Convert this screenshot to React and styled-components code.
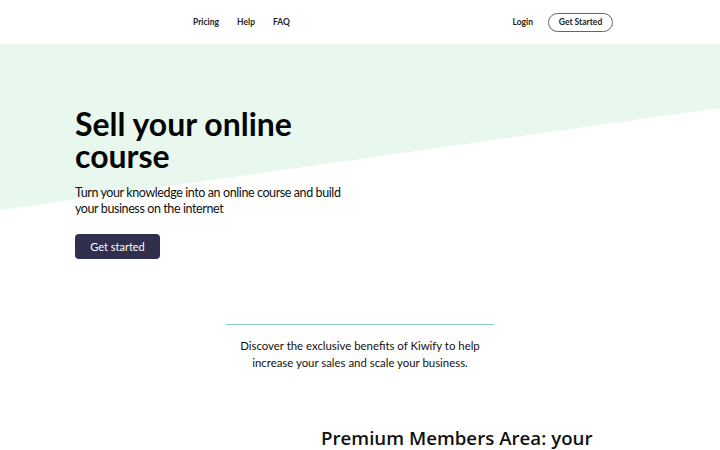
import React from "react"
import styled, { createGlobalStyle } from "styled-components"

const GlobalStyle = createGlobalStyle`
  * { box-sizing: border-box; }
  body {
    margin: 0;
    background: #fff;
    font-family: Lato, "Noto Sans", sans-serif;
    color: #111;
  }
`

const App = () => {
  return (
    <>
      <GlobalStyle />
      <Header>
        <NavLinks>
          <NavLink href="#">Pricing</NavLink>
          <NavLink href="#">Help</NavLink>
          <NavLink href="#">FAQ</NavLink>
        </NavLinks>
        <NavActions>
          <NavLink href="#">Login</NavLink>
          <OutlineButton href="#">Get Started</OutlineButton>
        </NavActions>
      </Header>

      <Hero>
        <HeroContent>
          <HeroTitle>Sell your online course</HeroTitle>
          <HeroText>
            Turn your knowledge into an online course and build your business on
            the internet
          </HeroText>
          <PrimaryButton href="#">Get started</PrimaryButton>
        </HeroContent>
      </Hero>

      <Benefits>
        <Divider />
        <BenefitsText>
          Discover the exclusive benefits of Kiwify to help increase your sales
          and scale your business.
        </BenefitsText>
      </Benefits>

      <Feature>
        <FeatureTitle>Premium Members Area: your</FeatureTitle>
      </Feature>
    </>
  )
}

export default App

const Header = styled.header`
  height: 44px;
  display: flex;
  align-items: center;
  justify-content: space-between;
  padding: 0 107px 0 193px;
`

const NavLinks = styled.nav`
  display: flex;
  align-items: center;
  gap: 18px;
`

const NavActions = styled.div`
  display: flex;
  align-items: center;
  gap: 15px;
`

const NavLink = styled.a`
  font-size: 8.5px;
  font-weight: 700;
  color: #222;
  text-decoration: none;
`

const OutlineButton = styled.a`
  display: inline-flex;
  align-items: center;
  justify-content: center;
  width: 65px;
  height: 19px;
  border: 1px solid #666;
  border-radius: 10px;
  font-size: 8.5px;
  font-weight: 700;
  color: #222;
  text-decoration: none;
`

const Hero = styled.section`
  position: relative;
  height: 240px;
  padding: 64px 0 0 75px;

  &::before {
    content: "";
    position: absolute;
    inset: 0;
    background: #e8f8ee;
    clip-path: polygon(0 0, 100% 0, 100% 64px, 0 166px);
    z-index: -1;
  }
`

const HeroContent = styled.div`
  width: 290px;
`

const HeroTitle = styled.h1`
  margin: 0;
  font-size: 32px;
  line-height: 32px;
  font-weight: 700;
  color: #050505;
`

const HeroText = styled.p`
  margin: 13px 0 17px;
  font-size: 12.5px;
  line-height: 16px;
  letter-spacing: -0.4px;
  color: #111;
  width: 270px;
`

const PrimaryButton = styled.a`
  display: inline-flex;
  align-items: center;
  justify-content: center;
  width: 85px;
  height: 25px;
  border-radius: 4px;
  background: #302f4d;
  color: #fff;
  font-size: 11px;
  text-decoration: none;
`

const Benefits = styled.section`
  display: flex;
  flex-direction: column;
  align-items: center;
  padding-top: 40px;
`

const Divider = styled.hr`
  width: 268px;
  margin: 0 0 12px;
  border: none;
  border-top: 1px solid #8fcfc2;
`

const BenefitsText = styled.p`
  margin: 0;
  width: 262px;
  text-align: center;
  font-size: 11.4px;
  line-height: 17px;
  color: #111;
`

const Feature = styled.section`
  padding: 53px 0 0 321px;
`

const FeatureTitle = styled.h2`
  margin: 0;
  font-family: "Open Sans", sans-serif;
  font-size: 18.7px;
  line-height: 27px;
  font-weight: 600;
  color: #111;
  white-space: nowrap;
`
